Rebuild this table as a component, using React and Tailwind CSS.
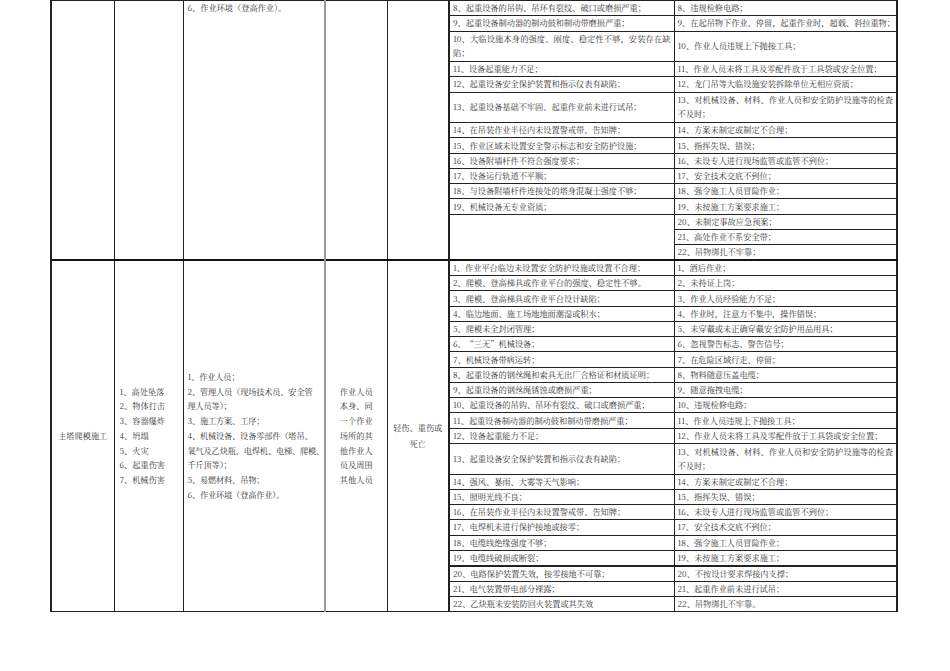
const sec1 = [
  { l: "8、起重设备的吊钩、吊环有裂纹、破口或磨损严重；", r: "8、违规检修电路；" },
  { l: "9、起重设备制动器的制动鼓和制动带磨损严重；", r: "9、在起吊物下作业、停留，起重作业时，超载、斜拉重物；" },
  { l: "10、大临设施本身的强度、刚度、稳定性不够，安装存在缺陷；", r: "10、作业人员违规上下抛接工具；", tall: true },
  { l: "11、设备起重能力不足；", r: "11、作业人员未将工具及零配件放于工具袋或安全位置；" },
  { l: "12、起重设备安全保护装置和指示仪表有缺陷；", r: "12、龙门吊等大临设施安装拆除单位无相应资质；" },
  { l: "13、起重设备基础不牢固、起重作业前未进行试吊；", r: "13、对机械设备、材料、作业人员和安全防护设施等的检查不及时；", tall: true },
  { l: "14、在吊装作业半径内未设置警戒带、告知牌；", r: "14、方案未制定或制定不合理；" },
  { l: "15、作业区域未设置安全警示标志和安全防护设施；", r: "15、指挥失误、错误；" },
  { l: "16、设备附墙杆件不符合强度要求；", r: "16、未设专人进行现场监管或监管不到位；" },
  { l: "17、设备运行轨道不平顺；", r: "17、安全技术交底不到位；" },
  { l: "18、与设备附墙杆件连接处的塔身混凝土强度不够；", r: "18、强令施工人员冒险作业；" },
  { l: "19、机械设备无专业资质；", r: "19、未按施工方案要求施工；" },
  { l: "", r: "20、未制定事故应急预案；", span: 3 },
  { r: "21、高处作业不系安全带；" },
  { r: "22、吊物绑扎不牢靠；" },
];

const sec2 = [
  { l: "1、作业平台临边未设置安全防护设施或设置不合理；", r: "1、酒后作业；" },
  { l: "2、爬模、登高梯具或作业平台的强度、稳定性不够。", r: "2、未持证上岗；" },
  { l: "3、爬模、登高梯具或作业平台设计缺陷；", r: "3、作业人员经验能力不足；" },
  { l: "4、临边地面、施工场地地面潮湿或积水；", r: "4、作业时，注意力不集中，操作错误；" },
  { l: "5、爬模未全封闭管理；", r: "5、未穿戴或未正确穿戴安全防护用品用具；" },
  { l: "6、“三无”机械设备；", r: "6、忽视警告标志、警告信号；" },
  { l: "7、机械设备带病运转；", r: "7、在危险区域行走、停留；" },
  { l: "8、起重设备的钢丝绳和索具无出厂合格证和材质证明；", r: "8、物料随意压盖电缆；" },
  { l: "9、起重设备的钢丝绳锈蚀或磨损严重；", r: "9、随意拖拽电缆；" },
  { l: "10、起重设备的吊钩、吊环有裂纹、破口或磨损严重；", r: "10、违规检修电路；" },
  { l: "11、起重设备制动器的制动鼓和制动带磨损严重；", r: "11、作业人员违规上下抛接工具；" },
  { l: "12、设备起重能力不足；", r: "12、作业人员未将工具及零配件放于工具袋或安全位置；" },
  { l: "13、起重设备安全保护装置和指示仪表有缺陷；", r: "13、对机械设备、材料、作业人员和安全防护设施等的检查不及时；", tall: true },
  { l: "14、强风、暴雨、大雾等天气影响；", r: "14、方案未制定或制定不合理；" },
  { l: "15、照明光线不良；", r: "15、指挥失误、错误；" },
  { l: "16、在吊装作业半径内未设置警戒带、告知牌；", r: "16、未设专人进行现场监管或监管不到位；" },
  { l: "17、电焊机未进行保护接地或接零；", r: "17、安全技术交底不到位；" },
  { l: "18、电缆线绝缘强度不够；", r: "18、强令施工人员冒险作业；" },
  { l: "19、电缆线破损或断裂；", r: "19、未按施工方案要求施工；" },
  { l: "20、电路保护装置失效，接零接地不可靠；", r: "20、不按设计要求焊接内支撑；", heavy: true },
  { l: "21、电气装置带电部分裸露；", r: "21、起重作业前未进行试吊；" },
  { l: "22、乙炔瓶未安装防回火装置或其失效", r: "22、吊物绑扎不牢靠。" },
];

const hazards = ["1、高处坠落", "2、物体打击", "3、容器爆炸", "4、坍塌", "5、火灾", "6、起重伤害", "7、机械伤害"];
const causes = [
  "1、作业人员；",
  "2、管理人员（现场技术员、安全管",
  "理人员等）；",
  "3、施工方案、工序；",
  "4、机械设备、设备零部件（塔吊、",
  "氧气及乙炔瓶、电焊机、电梯、爬模、",
  "千斤顶等）；",
  "5、易燃材料、吊物；",
  "6、作业环境（登高作业）。",
];
const victims = ["作业人员", "本身、同", "一个作业", "场所的其", "他作业人", "员及周围", "其他人员"];

const cell = "border border-[#222] px-[3px] py-0 align-middle";

function ItemCell({ text, tall, heavy, left }) {
  return (
    <td
      className={`${cell} ${left ? "border-l-2" : ""} ${heavy ? "border-t-2" : ""} ${
        tall ? "text-justify" : "whitespace-nowrap"
      }`}
    >
      {text}
    </td>
  );
}

export default function App() {
  return (
    <div className="w-[950px] h-[671px] bg-white pl-[50px] overflow-hidden font-['Noto_Serif_CJK_SC','Noto_Sans_CJK_SC',sans-serif] text-[#333]">
      <table className="table-fixed border-collapse w-[846px] text-[8.2px] leading-[14px] border-x-2 border-[#222]">
        <colgroup>
          <col className="w-[63px]" />
          <col className="w-[69px]" />
          <col className="w-[142px]" />
          <col className="w-[62px]" />
          <col className="w-[62px]" />
          <col className="w-[225px]" />
          <col className="w-[223px]" />
        </colgroup>
        <tbody>
          {sec1.map((row, i) => (
            <tr key={"a" + i} className={row.tall ? "h-[30.6px]" : "h-[15.25px]"}>
              {i === 0 && (
                <>
                  <td rowSpan={15} className={`${cell} border-l-2`} />
                  <td rowSpan={15} className={cell} />
                  <td rowSpan={15} className={`${cell} align-top px-[4px] pt-0`}>
                    6、作业环境（登高作业）。
                  </td>
                  <td rowSpan={15} className={`${cell} border-l-2 border-l-[#999]`} />
                  <td rowSpan={15} className={cell} />
                </>
              )}
              {row.l !== undefined &&
                (row.span ? (
                  <td rowSpan={row.span} className={`${cell} border-l-2`} />
                ) : (
                  <ItemCell text={row.l} tall={row.tall} left />
                ))}
              <ItemCell text={row.r} tall={row.tall} />
            </tr>
          ))}
          {sec2.map((row, i) => (
            <tr
              key={"b" + i}
              className={`${row.tall ? "h-[30.6px]" : "h-[15.25px]"} ${i === 0 ? "border-t-2 border-[#111]" : ""}`}
            >
              {i === 0 && (
                <>
                  <td rowSpan={22} className={`${cell} border-l-2 text-center`}>
                    主塔爬模施工
                  </td>
                  <td rowSpan={22} className={`${cell} px-[5px] leading-[14.7px]`}>
                    {hazards.map((h) => (
                      <div key={h} className="whitespace-nowrap">{h}</div>
                    ))}
                  </td>
                  <td rowSpan={22} className={`${cell} px-[4px] leading-[14.7px]`}>
                    {causes.map((c) => (
                      <div key={c} className="whitespace-nowrap tracking-[-0.15px]">{c}</div>
                    ))}
                  </td>
                  <td rowSpan={22} className={`${cell} border-l-2 border-l-[#999] text-center leading-[14.7px]`}>
                    {victims.map((v) => (
                      <div key={v} className="whitespace-nowrap">{v}</div>
                    ))}
                  </td>
                  <td rowSpan={22} className={`${cell} text-center leading-[16px]`}>
                    <div className="whitespace-nowrap">轻伤、重伤或</div>
                    <div>死亡</div>
                  </td>
                </>
              )}
              <ItemCell text={row.l} tall={row.tall} heavy={row.heavy} left />
              <ItemCell text={row.r} tall={row.tall} heavy={row.heavy} />
            </tr>
          ))}
        </tbody>
      </table>
    </div>
  );
}
